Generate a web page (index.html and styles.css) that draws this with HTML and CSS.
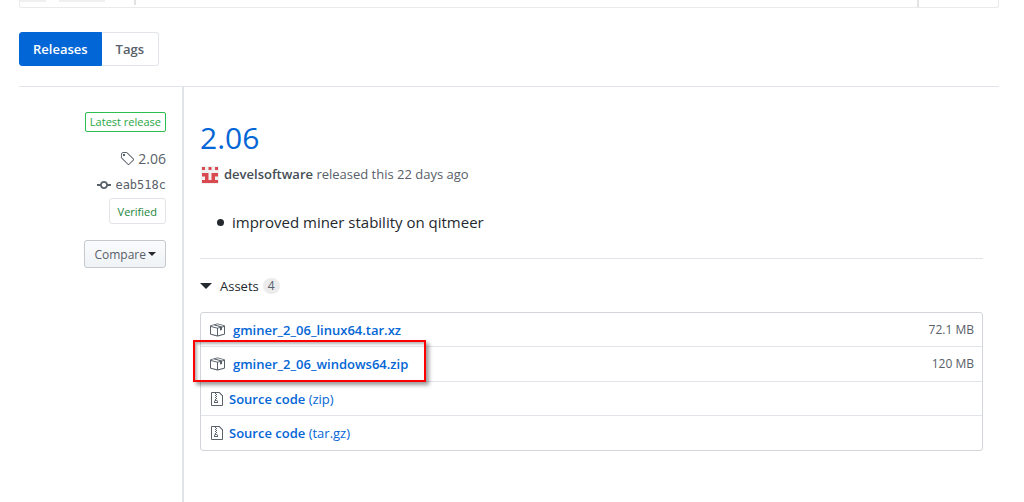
FILE: index.html
```html
<!DOCTYPE html>
<html lang="en">
<head>
    <meta charset="UTF-8">
    <meta name="viewport" content="width=device-width, initial-scale=1.0">
    <title>Releases</title>

    <!-- style -->
    <link rel="stylesheet" href="styles.css">
</head>
<body>
    <!-- end of the box above -->
    <div class="top-box">
        <div class="top-left"><span class="faded"></span><span class="faded wide"></span></div>
        <div class="top-middle"></div>
        <div class="top-right"></div>
    </div>

    <nav class="subnav">
        <a class="subnav-item selected" href="#releases">Releases</a>
        <a class="subnav-item" href="#tags">Tags</a>
    </nav>

    <main class="release">
        <aside class="release-side">
            <a class="label-latest" href="#latest">Latest release</a>
            <a class="side-link tag" href="#tag">
                <svg width="14" height="16" viewBox="0 0 14 16"><path fill-rule="evenodd" d="M7.73 1.73C7.26 1.26 6.62 1 5.96 1H3.5C2.13 1 1 2.13 1 3.5v2.47c0 .66.27 1.3.73 1.77l6.06 6.06c.39.39 1.02.39 1.41 0l4.59-4.59a.996.996 0 000-1.41L7.73 1.73zM2.38 7.09c-.31-.3-.47-.7-.47-1.13V3.5c0-.88.72-1.59 1.59-1.59h2.47c.42 0 .83.16 1.13.47l6.14 6.13-4.73 4.73-6.13-6.15zM3.01 3h2v2H3V3h.01z"/></svg>
                2.06
            </a>
            <a class="side-link commit" href="#commit">
                <svg width="14" height="16" viewBox="0 0 14 16"><path fill-rule="evenodd" d="M10.86 7c-.45-1.72-2-3-3.86-3-1.86 0-3.41 1.28-3.86 3H0v2h3.14c.45 1.72 2 3 3.86 3 1.86 0 3.41-1.28 3.86-3H14V7h-3.14zM7 10.2c-1.22 0-2.2-.98-2.2-2.2 0-1.22.98-2.2 2.2-2.2 1.22 0 2.2.98 2.2 2.2 0 1.22-.98 2.2-2.2 2.2z"/></svg>
                eab518c
            </a>
            <button class="verified">Verified</button>
            <button class="compare">Compare <span class="caret"></span></button>
        </aside>

        <section class="release-main">
            <h1><a href="#release">2.06</a></h1>
            <p class="author">
                <svg class="avatar" width="20" height="20" viewBox="0 0 40 40">
                    <path fill="#f0f0f0" d="M2 4h36v36H2z"/>
                    <path fill="#d84a50" d="M4 6h6v6H4zM17 6h6v6h-6zM30 6h6v6h-6zM4 18h13v7H4zM23 18h13v7H23zM10 25h7v7h-7zM23 25h7v7h-7zM4 32h32v6H4z"/>
                </svg>
                <span><a href="#author">develsoftware</a> released this 22 days ago</span>
            </p>
            <ul class="notes">
                <li>improved miner stability on qitmeer</li>
            </ul>

            <details class="assets" open>
                <summary>Assets <span class="counter">4</span></summary>
                <ul class="asset-list">
                    <li>
                        <a href="#linux">
                            <svg width="16" height="16" viewBox="0 0 16 16"><path fill-rule="evenodd" d="M1 4.27v7.47c0 .45.3.84.75.97l6.5 1.73c.16.05.34.05.5 0l6.5-1.73c.45-.13.75-.52.75-.97V4.27c0-.45-.3-.84-.75-.97l-6.5-1.74a1.4 1.4 0 00-.5 0L1.75 3.3c-.45.13-.75.52-.75.97zm7 9.09l-6-1.59V5l6 1.61v6.75zM2 4l2.5-.67L11 5.06l-2.5.67L2 4zm13 7.77l-6 1.59V6.61l2-.55V8.5l2-.53V5.53L15 5v6.77zm-2-7.24L6.5 2.8l2-.53L15 4l-2 .53z"/></svg>
                            <b>gminer_2_06_linux64.tar.xz</b>
                        </a>
                        <small>72.1 MB</small>
                    </li>
                    <li class="marked">
                        <a href="#windows">
                            <svg width="16" height="16" viewBox="0 0 16 16"><path fill-rule="evenodd" d="M1 4.27v7.47c0 .45.3.84.75.97l6.5 1.73c.16.05.34.05.5 0l6.5-1.73c.45-.13.75-.52.75-.97V4.27c0-.45-.3-.84-.75-.97l-6.5-1.74a1.4 1.4 0 00-.5 0L1.75 3.3c-.45.13-.75.52-.75.97zm7 9.09l-6-1.59V5l6 1.61v6.75zM2 4l2.5-.67L11 5.06l-2.5.67L2 4zm13 7.77l-6 1.59V6.61l2-.55V8.5l2-.53V5.53L15 5v6.77zm-2-7.24L6.5 2.8l2-.53L15 4l-2 .53z"/></svg>
                            <b>gminer_2_06_windows64.zip</b>
                        </a>
                        <small>120 MB</small>
                    </li>
                    <li>
                        <a class="source" href="#zip">
                            <svg width="12" height="16" viewBox="0 0 12 16"><path fill-rule="evenodd" d="M8.5 1H1a1 1 0 00-1 1v12a1 1 0 001 1h10a1 1 0 001-1V4.5L8.5 1zM11 14H1V2h3v1h1V2h3l3 3v9zM5 4V3h1v1H5zM4 4h1v1H4V4zm1 2V5h1v1H5zM4 6h1v1H4V6zm1 2V7h1v1H5zM4 9.28A2 2 0 003 11v1h4v-1a2 2 0 00-2-2V8H4v1.28zM6 10v1H4v-1h2z"/></svg>
                            <span><b>Source code</b> (zip)</span>
                        </a>
                    </li>
                    <li>
                        <a class="source" href="#tar">
                            <svg width="12" height="16" viewBox="0 0 12 16"><path fill-rule="evenodd" d="M8.5 1H1a1 1 0 00-1 1v12a1 1 0 001 1h10a1 1 0 001-1V4.5L8.5 1zM11 14H1V2h3v1h1V2h3l3 3v9zM5 4V3h1v1H5zM4 4h1v1H4V4zm1 2V5h1v1H5zM4 6h1v1H4V6zm1 2V7h1v1H5zM4 9.28A2 2 0 003 11v1h4v-1a2 2 0 00-2-2V8H4v1.28zM6 10v1H4v-1h2z"/></svg>
                            <span><b>Source code</b> (tar.gz)</span>
                        </a>
                    </li>
                </ul>
            </details>
        </section>
    </main>
</body>
</html>
```
FILE: styles.css
```css
*, *::after {
    box-sizing: border-box;
}
body {
    display: flex;
    flex-direction: column;
    min-height: 100vh;
    margin: 0;
    padding: 0 25px 0 19px;
    font-family: "Open Sans", "Noto Sans", sans-serif;
    font-size: 13px;
    line-height: 20px;
    color: #24292e;
    background: #fff;
}
a {
    color: #0366d6;
    text-decoration: none;
}
b {
    font-weight: 600;
}
svg {
    flex: none;
    fill: #586069;
}

/* top box */
.top-box {
    display: flex;
    height: 8px;
    border: 1px solid #e9eaec;
    border-top: 0;
    border-radius: 0 0 3px 3px;
}
.top-left {
    display: flex;
    width: 116px;
    height: 5px;
    border-right: 2px solid #e1e2e4;
}
.faded {
    width: 26px;
    height: 2px;
    background: #f0f0f1;
}
.faded.wide {
    width: 46px;
    margin-left: 13px;
}
.top-middle {
    flex: 1;
}
.top-right {
    width: 81px;
    border-left: 2px solid #e1e2e4;
}

/* releases / tags */
.subnav {
    display: flex;
    margin: 24px 0 20px;
}
.subnav-item {
    padding: 6px 14px;
    border: 1px solid #e1e4e8;
    border-left: 0;
    border-radius: 0 3px 3px 0;
    font-weight: 600;
    color: #586069;
}
.subnav-item.selected {
    padding: 6px 13px;
    border: 1px solid #0366d6;
    border-radius: 3px 0 0 3px;
    color: #fff;
    background: #0366d6;
}

.release {
    display: flex;
    flex: 1;
    border-top: 1px solid #e1e4e8;
}

/* left column */
.release-side {
    display: flex;
    flex-direction: column;
    align-items: flex-end;
    width: 163px;
    padding: 25px 16px 0 0;
}
.label-latest {
    padding: 0 4px;
    border: 1px solid #2cbe4e;
    border-radius: 2px;
    font-size: 11px;
    line-height: 18px;
    color: #28a745;
}
.side-link {
    display: flex;
    align-items: center;
    gap: 4px;
    color: #586069;
}
.tag {
    margin-top: 17px;
    font-size: 14px;
}
.commit {
    margin-top: 6px;
    font-family: "DejaVu Sans Mono", monospace;
    font-size: 12px;
}
.verified {
    height: 26px;
    margin-top: 3px;
    padding: 0 8px;
    border: 1px solid #e1e4e8;
    border-radius: 3px;
    font: 11px "Open Sans", sans-serif;
    color: #22863a;
    background: #fff;
}
.compare {
    display: flex;
    align-items: center;
    gap: 2px;
    height: 28px;
    margin-top: 16px;
    padding: 0 9px;
    border: 1px solid #c5c9cd;
    border-radius: 3px;
    font: 12px "Open Sans", sans-serif;
    color: #586069;
    background: linear-gradient(#fafbfc, #eff3f6);
}
.caret {
    border: 4px solid transparent;
    border-top-color: #24292e;
    border-bottom: 0;
}

/* right column */
.release-main {
    flex: 1;
    min-width: 0;
    padding: 32px 16px 50px;
    border-left: 2px solid #e1e4e8;
}
h1 {
    margin: 0;
    font-size: 30px;
    font-weight: 400;
    line-height: 38px;
}
.author {
    display: flex;
    align-items: center;
    gap: 4px;
    margin: 7px 0 0;
    color: #586069;
}
.author a {
    font-weight: 600;
    color: #444d56;
}
.notes {
    margin: 26px 0 0;
    padding: 0 0 24px 17px;
    border-bottom: 1px solid #e1e4e8;
    font-size: 15px;
    line-height: 24px;
    list-style: none;
}
.notes li {
    display: flex;
    align-items: center;
    gap: 8px;
}
.notes li::before {
    content: "";
    width: 7px;
    height: 7px;
    border-radius: 50%;
    background: #24292e;
}

/* assets */
.assets summary {
    display: flex;
    align-items: center;
    margin: 17px 0 16px;
    cursor: pointer;
}
.assets summary::before {
    content: "";
    margin-right: 8px;
    border: 6px solid transparent;
    border-top-color: #24292e;
    border-bottom: 0;
}
.counter {
    margin-left: 4px;
    padding: 0 5px;
    border-radius: 20px;
    font-size: 12px;
    line-height: 16px;
    color: #586069;
    background: #ececed;
}
.asset-list {
    margin: 0;
    padding: 0;
    border: 1px solid #d1d5da;
    border-radius: 3px;
    list-style: none;
}
.asset-list li {
    position: relative;
    display: flex;
    justify-content: space-between;
    align-items: center;
    padding: 7px 8px;
}
.asset-list li:nth-child(odd) {
    padding-bottom: 6px;
}
.asset-list li + li {
    border-top: 1px solid #e1e4e8;
}
.asset-list a {
    display: flex;
    align-items: center;
    gap: 8px;
}
.asset-list .source {
    gap: 6px;
    padding-left: 2px;
}
.asset-list small {
    font-size: 12px;
    color: #586069;
}
/* red frame over the windows build */
.marked::after {
    content: "";
    position: absolute;
    z-index: 1;
    top: -7px;
    left: -8px;
    width: 233px;
    height: 42px;
    border: 2px solid #f00;
    box-shadow: 3px 3px 4px rgba(0, 0, 0, 0.4), inset 2px 2px 3px rgba(0, 0, 0, 0.3);
}
```
